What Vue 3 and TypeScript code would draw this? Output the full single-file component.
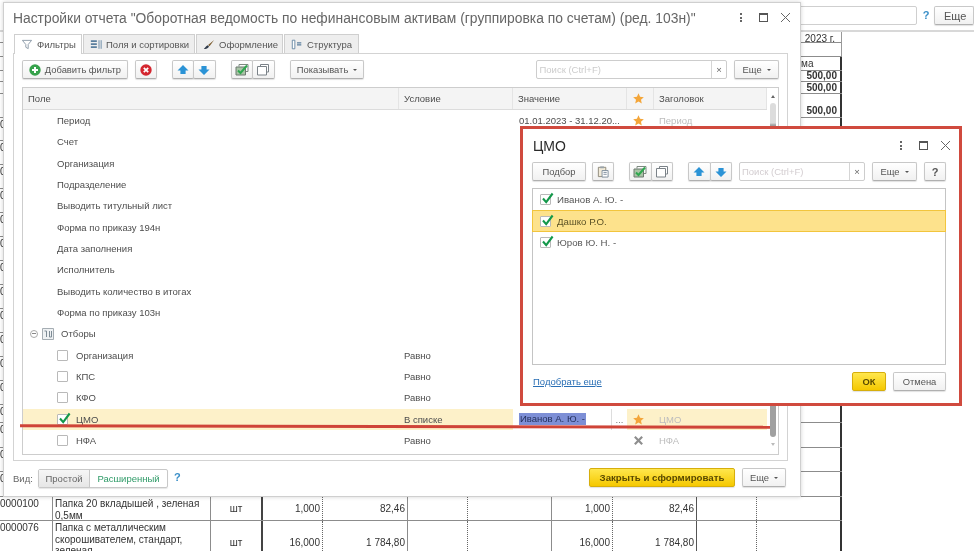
<script setup lang="ts">
interface FilterRow {
  label: string
  level: 'plain' | 'group' | 'check'
  checked?: boolean
  cond?: string
  value?: string
  mark?: 'star' | 'cross'
  head?: string
  active?: boolean
}

interface ReportRow {
  h: number
  code?: string
  name?: string
  unit?: string
  qty?: string
  sum?: string
  total?: string
  bold?: boolean
  end?: boolean
}

const filterRows: FilterRow[] = [
  { label: 'Период', level: 'plain', value: '01.01.2023 - 31.12.20...', mark: 'star', head: 'Период' },
  { label: 'Счет', level: 'plain' },
  { label: 'Организация', level: 'plain' },
  { label: 'Подразделение', level: 'plain' },
  { label: 'Выводить титульный лист', level: 'plain' },
  { label: 'Форма по приказу 194н', level: 'plain' },
  { label: 'Дата заполнения', level: 'plain' },
  { label: 'Исполнитель', level: 'plain' },
  { label: 'Выводить количество в итогах', level: 'plain' },
  { label: 'Форма по приказу 103н', level: 'plain' },
  { label: 'Отборы', level: 'group' },
  { label: 'Организация', level: 'check', cond: 'Равно' },
  { label: 'КПС', level: 'check', cond: 'Равно' },
  { label: 'КФО', level: 'check', cond: 'Равно' },
  { label: 'ЦМО', level: 'check', checked: true, cond: 'В списке', value: 'Иванов А. Ю. -', mark: 'star', head: 'ЦМО', active: true },
  { label: 'НФА', level: 'check', cond: 'Равно', mark: 'cross', head: 'НФА' }
]

const people: string[] = ['Иванов А. Ю. -', 'Дашко Р.О.', 'Юров Ю. Н. -']

const tabs = [
  { label: 'Фильтры', icon: 'i-funnel', on: true },
  { label: 'Поля и сортировки', icon: 'i-fields', on: false },
  { label: 'Оформление', icon: 'i-brush', on: false },
  { label: 'Структура', icon: 'i-tree', on: false }
]

const middle: ReportRow[] = Array.from({ length: 12 }, (_, i) => ({ h: i === 0 ? 23 : 24, code: '0' }))

const reportRows: ReportRow[] = [
  { h: 11, total: '2023 г.' },
  { h: 14 },
  { h: 14, total: 'ма', end: true },
  { h: 11, total: '500,00', bold: true, end: true },
  { h: 12, total: '500,00', bold: true, end: true },
  { h: 24, total: '500,00', bold: true, end: true },
  ...middle.map((r) => ({ ...r, end: true })),
  { h: 18, code: '0', end: true },
  { h: 25, code: '0', end: true },
  { h: 24, code: '0', end: true },
  { h: 25, code: '0', end: true },
  { h: 24, code: '0000100', name: 'Папка 20 вкладышей , зеленая 0,5мм', unit: 'шт', qty: '1,000', sum: '82,46', end: true },
  { h: 45, code: '0000076', name: 'Папка с металлическим скорошивателем, стандарт, зеленая', unit: 'шт', qty: '16,000', sum: '1 784,80', end: true }
]

function rowHeight(h: number): string {
  return `${h}px`
}
</script>

<template>
  <div class="page">
    <svg class="sprite" width="0" height="0">
      <defs>
        <symbol id="i-funnel" viewBox="0 0 12 12"><path d="M1 1.5h10L7.3 6v4.5L4.7 9V6z" fill="#fff" stroke="#8a98a6" /></symbol>
        <symbol id="i-fields" viewBox="0 0 14 12"><path d="M1 1h7v2H1zM1 4.5h7v2H1zM1 8h7v2H1z" fill="#5b7f9e" /><path d="M10.5 1v10M13 1v10" stroke="#5b7f9e" /></symbol>
        <symbol id="i-brush" viewBox="0 0 14 12"><path d="M13 .8 6 6.5l1.6 1.4z" fill="#7a5a2c" /><path d="M5.6 7 7 8.4C6 11 3 11.6 1 11c1.6-.8 2.2-3.4 4.6-4z" fill="#2f3a4a" /></symbol>
        <symbol id="i-tree" viewBox="0 0 14 12"><path d="M1.5 1h3v10h-3z" fill="#fff" stroke="#5b7f9e" /><path d="M7 4h5M7 6.5h5" stroke="#5b7f9e" stroke-width="1.4" /></symbol>
        <symbol id="i-plus" viewBox="0 0 12 12"><circle cx="6" cy="6" r="5.7" fill="#36a24b" /><path d="M6 3v6M3 6h6" stroke="#fff" stroke-width="2" /></symbol>
        <symbol id="i-del" viewBox="0 0 12 12"><circle cx="6" cy="6" r="5.7" fill="#d4262f" /><path d="m3.8 3.8 4.4 4.4m0-4.4L3.8 8.2" stroke="#fff" stroke-width="1.7" /></symbol>
        <symbol id="i-up" viewBox="0 0 12 12"><path d="M6 1 11.5 6.5H8.6V10H3.4V6.5H.5z" fill="#2b93d6" /></symbol>
        <symbol id="i-down" viewBox="0 0 12 12"><path d="M6 11 .5 5.5h2.9V2h5.2v3.5h2.9z" fill="#2b93d6" /></symbol>
        <symbol id="i-checkall" viewBox="0 0 14 12"><path d="M4 3V1h9v7h-2" fill="none" stroke="#7d8a80" /><path d="M1 3.5h9.5v8H1z" fill="#a9c4a6" stroke="#6d7a70" /><path d="m3 7 2.5 2.5L12 2" fill="none" stroke="#2fa84f" stroke-width="2" /></symbol>
        <symbol id="i-copy" viewBox="0 0 14 12"><path d="M4.5 3V1h8v7.5h-2" fill="#fff" stroke="#7b8288" /><path d="M1.5 3h9v8.5h-9z" fill="#fff" stroke="#7b8288" /></symbol>
        <symbol id="i-clip" viewBox="0 0 14 14"><path d="M2 2.5h8v10H2z" fill="#f1ead8" stroke="#8b8778" /><path d="M4 1.5h4v2H4z" fill="#9aa3aa" /><path d="M6 6h6.5v7H6z" fill="#fff" stroke="#7c8b9a" /><path d="M7.5 8h3.5M7.5 10h3.5" stroke="#7c8b9a" /></symbol>
        <symbol id="i-star" viewBox="0 0 12 12"><path d="m6 .4 1.7 3.8 4.1.4-3.1 2.7.9 4.1L6 9.3l-3.6 2.1.9-4.1L.2 4.6l4.1-.4z" fill="#f4a63a" /></symbol>
        <symbol id="i-cross" viewBox="0 0 12 12"><path d="m2 2 8 8m0-8-8 8" stroke="#8e8e8e" stroke-width="2.4" /></symbol>
        <symbol id="i-tick" viewBox="0 0 14 14"><path d="m3 6.5 3.2 3.6L12.6 1.5" fill="none" stroke="#13984a" stroke-width="2.1" /></symbol>
        <symbol id="i-group" viewBox="0 0 12 12"><path d="M.5.5h11v11H.5z" fill="#eef1f3" stroke="#a5adb3" /><path d="M2.5 3h2v6M7.5 3v6h2V3" fill="none" stroke="#7d8b95" /></symbol>
      </defs>
    </svg>

    <!-- report behind the windows -->
    <div class="report">
      <div class="report-bar">
        <div class="report-input"></div>
        <span class="help">?</span>
        <button class="btn report-more">Еще</button>
      </div>
      <div class="sheet">
        <div
          v-for="(r, i) in reportRows"
          :key="i"
          class="sheet-row"
          :style="{ height: rowHeight(r.h) }"
        >
          <div class="c c-code">{{ r.code }}</div>
          <div class="c c-name">{{ r.name }}</div>
          <div class="c c-unit">{{ r.unit }}</div>
          <div class="c c-num dot">{{ r.qty }}</div>
          <div class="c c-num">{{ r.sum }}</div>
          <div class="c c-num dot"></div>
          <div class="c c-num"></div>
          <div class="c c-num dot">{{ r.qty }}</div>
          <div class="c c-num c-strong">{{ r.sum }}</div>
          <div class="c c-num dot"></div>
          <div class="c c-num c-last" :class="{ bold: r.bold, 'c-end': r.end, 'c-low': r.h === 24 && r.bold, 'c-left': r.total === 'ма', 'c-date': r.total === '2023 г.' }">{{ r.total }}</div>
        </div>
      </div>
    </div>

    <!-- settings window -->
    <section class="win">
      <header class="win-title">
        <h1>Настройки отчета "Оборотная ведомость по нефинансовым активам (группировка по счетам) (ред. 103н)"</h1>
        <span class="win-ctl">
          <span class="dots"><i></i><i></i><i></i></span>
          <span class="maxi"></span>
          <span class="close"></span>
        </span>
      </header>

      <nav class="tabs">
        <div v-for="t in tabs" :key="t.label" class="tab" :class="{ on: t.on }">
          <svg class="tab-ico"><use :href="'#' + t.icon" /></svg>
          <span>{{ t.label }}</span>
        </div>
      </nav>

      <div class="panel">
        <div class="toolbar">
          <button class="btn add"><svg class="ico12"><use href="#i-plus" /></svg>Добавить фильтр</button>
          <button class="btn del"><svg class="ico12"><use href="#i-del" /></svg></button>
          <div class="group arrows">
            <button class="btn"><svg class="ico12"><use href="#i-up" /></svg></button>
            <button class="btn"><svg class="ico12"><use href="#i-down" /></svg></button>
          </div>
          <div class="group checks">
            <button class="btn"><svg class="ico14"><use href="#i-checkall" /></svg></button>
            <button class="btn"><svg class="ico14"><use href="#i-copy" /></svg></button>
          </div>
          <button class="btn show">Показывать <b class="caret"></b></button>
          <div class="search main-search">
            <span class="ph">Поиск (Ctrl+F)</span>
            <span class="clear">×</span>
          </div>
          <button class="btn more">Еще <b class="caret"></b></button>
        </div>

        <div class="tbl">
          <div class="tbl-main">
            <div class="tbl-row tbl-head">
              <div class="col">Поле</div>
              <div class="col">Условие</div>
              <div class="col">Значение</div>
              <div class="col col-mark"><svg class="ico11"><use href="#i-star" /></svg></div>
              <div class="col">Заголовок</div>
            </div>
            <div v-for="(row, i) in filterRows" :key="i" class="tbl-row body" :class="{ active: row.active }">
              <div class="col field" :class="'lv-' + row.level">
                <template v-if="row.level === 'group'">
                  <span class="minus"></span>
                  <svg class="ico12 group-ico"><use href="#i-group" /></svg>
                </template>
                <span v-if="row.level === 'check'" class="box">
                  <svg v-if="row.checked" class="tick"><use href="#i-tick" /></svg>
                </span>
                <span>{{ row.label }}</span>
              </div>
              <div class="col">{{ row.cond }}</div>
              <div class="col val" :class="{ editing: row.active }">
                <span v-if="row.active" class="sel">{{ row.value }}</span>
                <span v-else>{{ row.value }}</span>
                <span v-if="row.active" class="ell">...</span>
              </div>
              <div class="col col-mark">
                <svg v-if="row.mark" class="ico11"><use :href="row.mark === 'star' ? '#i-star' : '#i-cross'" /></svg>
              </div>
              <div class="col headcol">{{ row.head }}</div>
            </div>
          </div>
          <div class="scroll">
            <b class="sc-up"></b>
            <div class="thumb"></div>
            <b class="sc-down"></b>
          </div>
        </div>
      </div>

      <footer class="win-foot">
        <span class="vid">Вид:</span>
        <div class="seg">
          <span class="seg-a">Простой</span>
          <span class="seg-b">Расширенный</span>
        </div>
        <span class="help">?</span>
        <button class="btn primary form">Закрыть и сформировать</button>
        <button class="btn more">Еще <b class="caret"></b></button>
      </footer>
    </section>

    <div class="redline"></div>

    <!-- list dialog -->
    <section class="dlg">
      <header class="dlg-title">
        <h2>ЦМО</h2>
        <span class="win-ctl small">
          <span class="dots"><i></i><i></i><i></i></span>
          <span class="maxi"></span>
          <span class="close"></span>
        </span>
      </header>
      <div class="dlg-bar">
        <button class="btn pick">Подбор</button>
        <button class="btn clipb"><svg class="ico14"><use href="#i-clip" /></svg></button>
        <div class="group d-checks">
          <button class="btn"><svg class="ico14"><use href="#i-checkall" /></svg></button>
          <button class="btn"><svg class="ico14"><use href="#i-copy" /></svg></button>
        </div>
        <div class="group d-arrows">
          <button class="btn"><svg class="ico12"><use href="#i-up" /></svg></button>
          <button class="btn"><svg class="ico12"><use href="#i-down" /></svg></button>
        </div>
        <div class="search dlg-search">
          <span class="ph">Поиск (Ctrl+F)</span>
          <span class="clear">×</span>
        </div>
        <button class="btn d-more">Еще <b class="caret"></b></button>
        <button class="btn d-help">?</button>
      </div>
      <div class="list">
        <div v-for="(p, i) in people" :key="p" class="item" :class="{ cur: i === 1 }">
          <span class="box"><svg class="tick"><use href="#i-tick" /></svg></span>
          <span>{{ p }}</span>
        </div>
      </div>
      <footer class="dlg-foot">
        <a class="link">Подобрать еще</a>
        <button class="btn primary ok">ОК</button>
        <button class="btn cancel">Отмена</button>
      </footer>
    </section>
  </div>
</template>

<style scoped>
.page {
  position: relative;
  width: 974px;
  height: 551px;
  overflow: hidden;
  background: #fff;
  font-family: "Liberation Sans", Arial, sans-serif;
  font-size: 9.5px;
  color: #4d4d4d;
  filter: blur(0.35px);
}
.sprite { position: absolute; }
button { font-family: inherit; font-size: 9.4px; color: #555; }
svg { display: block; flex: none; }
.ico11 { width: 11px; height: 11px; }
.ico12 { width: 12px; height: 12px; }
.ico14 { width: 14px; height: 13px; }

.btn {
  box-sizing: border-box;
  height: 19px;
  padding: 0;
  display: flex;
  align-items: center;
  justify-content: center;
  border: 1px solid #c8c8c8;
  border-bottom-color: #b0b0b0;
  border-radius: 2px;
  background: linear-gradient(#fff, #f1f1f1);
  box-shadow: 0 1px 1px rgba(0, 0, 0, 0.12);
}
.primary {
  background: linear-gradient(#ffe74d, #f5c800);
  border-color: #d6ae0c;
  color: #5a4a00;
  font-weight: 700;
}
.caret {
  width: 0;
  height: 0;
  margin-left: 5px;
  border: 2px solid transparent;
  border-top: 2.5px solid #555;
  border-bottom: 0;
}
.help { color: #3a8fc8; font-weight: 700; font-size: 11px; }

/* report */
.report { width: 974px; }
.report-bar {
  box-sizing: border-box;
  height: 32px;
  padding: 6px 0 0 700px;
  display: flex;
  align-items: flex-start;
  gap: 0;
  border-bottom: 2px solid #d8d8d8;
}
.report-input {
  width: 229px;
  height: 17px;
  border: 1px solid #cfcfcf;
  border-radius: 2px;
}
.report-bar .help { margin: 3px 0 0 6px; width: 12px; }
.report-more {
  width: 40px;
  flex: none;
  justify-content: flex-start;
  padding-left: 9px;
  font-size: 11px;
}
.sheet { width: 842px; color: #333; font-size: 10px; }
.sheet-row {
  display: grid;
  grid-template-columns: 53px 158px 52px 60px 85px 60px 84px 61px 84px 60px 85px;
  box-sizing: border-box;
  border-bottom: 1px solid #8c8c8c;
}
.c {
  box-sizing: border-box;
  overflow: hidden;
  border-right: 1px solid #8c8c8c;
  line-height: 11.5px;
  white-space: normal;
}
.c-code { white-space: nowrap; padding-top: 1px; }
.c-name { padding: 1px 0 0 2px; }
.c-unit { display: flex; align-items: center; justify-content: center; border-right: 2px solid #444; }
.c-num { display: flex; align-items: center; justify-content: flex-end; padding-right: 2px; }
.dot { border-right: 1px dotted #666; }
.c-strong { border-right-color: #555; }
.c-last { border-right: 1px solid #999; padding-right: 3px; line-height: 10px; overflow: visible; }
.c-date { padding: 2px 6px 0 0; }
.c-end { border-right: 2px solid #333; }
.bold { font-weight: 700; color: #333; font-size: 10px; }
.c-low { align-items: flex-end; padding-bottom: 1px; }
.c-left { justify-content: flex-start; padding-left: 44px; }

/* settings window */
.win {
  position: absolute;
  left: 3px;
  top: 2px;
  width: 798px;
  height: 495px;
  box-sizing: border-box;
  padding: 0 9px;
  background: #fff;
  border: 1px solid #cfcfcf;
  box-shadow: 0 0 4px rgba(0, 0, 0, 0.18);
  display: flex;
  flex-direction: column;
}
.win-title {
  height: 29px;
  display: flex;
  align-items: center;
  justify-content: space-between;
  flex: none;
}
.win-title h1 {
  margin: 0;
  font-size: 13.85px;
  font-weight: 400;
  color: #666;
  white-space: nowrap;
}
.win-ctl { display: flex; align-items: center; gap: 13px; margin-right: 1px; }
.win-ctl.small { margin-right: -4px; }
.dots { display: flex; flex-direction: column; gap: 1.5px; margin-right: 4px; }
.dots i { width: 2px; height: 2px; background: #666; display: block; }
.maxi { width: 7px; height: 6px; border: 1px solid #555; border-top-width: 2px; }
.close {
  width: 9px;
  height: 9px;
  background:
    linear-gradient(45deg, transparent 46%, #666 46%, #666 54%, transparent 54%),
    linear-gradient(-45deg, transparent 46%, #666 46%, #666 54%, transparent 54%);
}
.tabs {
  display: flex;
  margin-top: 2px;
  padding-left: 1px;
  gap: 1px;
  position: relative;
  z-index: 1;
  height: 20px;
  flex: none;
}
.tab {
  box-sizing: border-box;
  height: 19px;
  padding: 0 0 0 6px;
  display: flex;
  align-items: center;
  gap: 4px;
  background: #eeeeee;
  border: 1px solid #cfcfcf;
  border-bottom: 0;
  color: #555;
  white-space: nowrap;
}
.tab:nth-child(2) { width: 112px; }
.tab:nth-child(3) { width: 87px; }
.tab:nth-child(4) { width: 75px; }
.tab.on { width: 68px; height: 20px; background: #fff; }
.tab-ico { width: 12px; height: 11px; }
.panel {
  box-sizing: border-box;
  width: 775px;
  height: 408px;
  margin-top: -1px;
  padding: 6px 8px 5px;
  border: 1px solid #d3d3d3;
  flex: none;
}
.toolbar { display: flex; align-items: flex-start; height: 27px; }
.add { width: 106px; gap: 4px; }
.del { width: 22px; margin-left: 7px; }
.group { display: flex; }
.group .btn { flex: 1; }
.group .btn + .btn { margin-left: -1px; }
.arrows { width: 44px; margin-left: 15px; }
.checks { width: 44px; margin-left: 15px; }
.show { width: 75px; margin-left: 15px; }
.search {
  box-sizing: border-box;
  height: 19px;
  display: flex;
  align-items: center;
  border: 1px solid #cdcdcd;
  border-radius: 2px;
  background: #fff;
}
.ph { flex: 1; padding-left: 2px; color: #ccc; }
.clear {
  width: 14px;
  align-self: stretch;
  display: flex;
  align-items: center;
  justify-content: center;
  border-left: 1px solid #d5d5d5;
  color: #666;
}
.main-search { width: 191px; margin-left: 172px; }
.more { width: 45px; margin-left: 7px; }
.tbl {
  box-sizing: border-box;
  height: 368px;
  display: flex;
  border: 1px solid #cdcdcd;
}
.tbl-main { width: 744px; }
.tbl-row {
  display: grid;
  grid-template-columns: 376px 114px 114px 27px 113px;
}
.tbl-head {
  height: 22px;
  background: #f4f4f4;
  border-bottom: 1px solid #dcdcdc;
  box-sizing: border-box;
}
.tbl-head .col { border-right: 1px solid #e4e4e4; padding-left: 5px; }
.col {
  display: flex;
  align-items: center;
  min-width: 0;
  white-space: nowrap;
  padding-left: 5px;
  box-sizing: border-box;
}
.body { height: 21.33px; }
.tbl-row .col-mark { justify-content: flex-start; padding: 0 0 0 6px; }
.field { padding-left: 0; }
.lv-plain { padding-left: 34px; }
.lv-group { padding-left: 7px; }
.lv-check { padding-left: 34px; gap: 8px; }
.minus {
  width: 6px;
  height: 6px;
  margin-right: 4px;
  border: 1px solid #aaa;
  border-radius: 50%;
  background: linear-gradient(transparent 2px, #888 2px, #888 3px, transparent 3px) center / 4px 100% no-repeat;
}
.group-ico { margin-right: 7px; }
.box {
  position: relative;
  width: 9px;
  height: 9px;
  flex: none;
  border: 1px solid #b9b9b9;
  border-radius: 1px;
  background: #fff;
}
.tick { position: absolute; left: -1px; top: -3px; width: 14px; height: 14px; }
.headcol { color: #bdbdbd; }
.val { padding-left: 6px; }
.active { background: #fdf1c9; }
.editing {
  background: #fff;
  padding: 0 0 0 6px;
  justify-content: space-between;
}
.sel { background: #7d8fd6; color: #24305c; padding: 0 1px; line-height: 12px; }
.ell {
  width: 15px;
  align-self: stretch;
  display: flex;
  align-items: center;
  justify-content: center;
  border-left: 1px solid #ddd;
  color: #777;
}
.scroll {
  flex: 1;
  display: flex;
  flex-direction: column;
  align-items: center;
  padding-top: 7px;
}
.sc-up, .sc-down { width: 0; height: 0; border: 2.5px solid transparent; }
.sc-up { border-bottom: 3px solid #666; border-top: 0; }
.sc-down { border-top: 3px solid #bbb; border-bottom: 0; margin-top: 6px; }
.thumb {
  width: 6px;
  height: 334px;
  margin-top: 5px;
  border-radius: 3px;
  background: linear-gradient(#dcdcdc 20px, #a0a0a0 22px);
}
.win-foot {
  display: flex;
  align-items: flex-start;
  height: 20px;
  margin-top: 7px;
  width: 773px;
}
.vid { color: #666; width: 25px; margin-top: 5px; }
.seg {
  box-sizing: border-box;
  width: 130px;
  height: 19px;
  margin-top: 1px;
  display: flex;
  border: 1px solid #c8c8c8;
  border-radius: 2px;
  box-shadow: 0 1px 1px rgba(0, 0, 0, 0.1);
}
.seg span { display: flex; align-items: center; justify-content: center; }
.seg-a { width: 50px; background: linear-gradient(#f6f6f6, #e6e6e6); border-right: 1px solid #c8c8c8; color: #666; }
.seg-b { flex: 1; color: #2f9b68; }
.win-foot .help { width: 415px; margin: 3px 0 0 6px; }
.form { width: 146px; font-size: 9.7px; }
.win-foot .more { width: 44px; margin-left: 7px; }

.redline {
  position: absolute;
  left: 20px;
  top: 424.7px;
  width: 750px;
  height: 2.6px;
  background: #cf4438;
  transform: rotate(0.1deg);
}

/* dialog */
.dlg {
  position: absolute;
  left: 520px;
  top: 126px;
  width: 442px;
  height: 280px;
  box-sizing: border-box;
  padding: 0 13px 0 9px;
  border: 3px solid #d04a3e;
  background: #fff;
  display: flex;
  flex-direction: column;
}
.dlg-title {
  height: 33px;
  display: flex;
  align-items: center;
  justify-content: space-between;
  flex: none;
}
.dlg-title h2 { margin: 0; font-size: 14px; font-weight: 400; color: #2a2a2a; padding-left: 1px; }
.dlg-bar { display: flex; height: 26px; flex: none; }
.pick { width: 54px; }
.clipb { width: 22px; margin-left: 6px; }
.d-checks { width: 44px; margin-left: 15px; }
.d-arrows { width: 44px; margin-left: 15px; }
.dlg-search { width: 126px; margin-left: 7px; }
.dlg-search .ph { color: #d3cdd0; }
.d-more { width: 45px; margin-left: 7px; }
.d-help { width: 22px; margin-left: 7px; font-weight: 700; font-size: 11px; }
.list {
  box-sizing: border-box;
  height: 177px;
  border: 1px solid #c4c4c4;
  flex: none;
}
.item {
  display: flex;
  align-items: center;
  gap: 6px;
  height: 21.3px;
  padding-left: 7px;
  font-size: 9.7px;
  color: #555;
  box-sizing: border-box;
}
.item.cur { background: #fde28c; border: 1px solid #f2c53d; padding-left: 7px; margin: 0 -1px; height: 22px; color: #5b5226; }
.dlg-foot { display: flex; align-items: center; height: 33px; }
.link { color: #2a6fb5; text-decoration: underline; flex: 1; padding-left: 1px; }
.ok { width: 34px; }
.cancel { width: 53px; margin-left: 7px; }
</style>

<style>
html, body { margin: 0; background: #fff; overflow: hidden; }
</style>
